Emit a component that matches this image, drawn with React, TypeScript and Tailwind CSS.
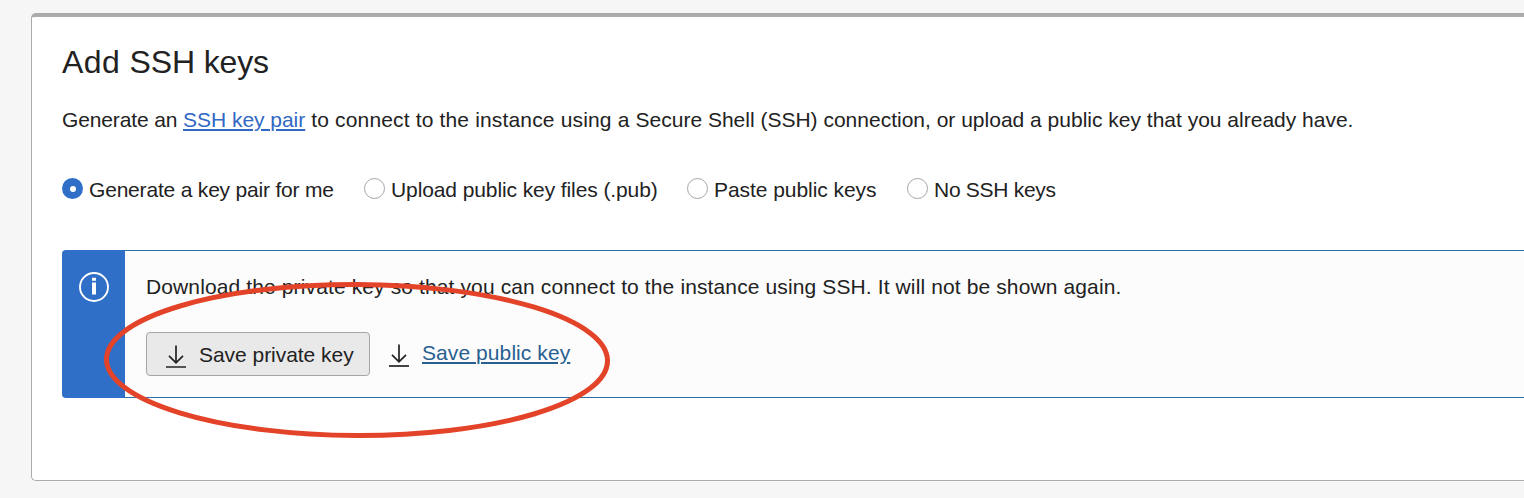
import React from "react";

function DownloadIcon({ className }: { className: string }) {
  return (
    <svg className={className} width="20" height="24" viewBox="0 0 20 24" fill="none" stroke="#222" strokeWidth="1.7">
      <path d="M10 0.5V17.5M3 10.8L10 17.8L17 10.8" />
      <path d="M0 22H20" />
    </svg>
  );
}

type OptionProps = { label: string; checked?: boolean; className: string; labelClass: string };

function RadioOption({ label, checked, className, labelClass }: OptionProps) {
  return (
    <label className={`flex shrink-0 items-start ${className}`}>
      {checked ? (
        <span className="flex size-[21px] shrink-0 items-center justify-center rounded-full bg-[#2f6fc8]">
          <span className="size-1.5 rounded-full bg-white" />
        </span>
      ) : (
        <span className="size-[21px] shrink-0 rounded-full border border-[#a6a6a6] bg-white" />
      )}
      <span className={`ml-1.5 ${labelClass}`}>{label}</span>
    </label>
  );
}

export default function App() {
  return (
    <div className="relative h-[498px] overflow-hidden bg-[#f6f6f6] pt-[13px] pl-[31px] font-['Liberation_Sans',Arial,sans-serif] text-[21px] leading-6 whitespace-nowrap text-[#222]">
      <section className="h-[468px] rounded-l-[5px] border-t-4 border-b border-l border-t-[#ababab] border-b-[#ababab] border-l-[#ababab] bg-white pt-[27px] pl-[30px]">
        <h1 className="text-[32px] leading-9">
          <span className="tracking-[0.4px]">Add </span>
          <span className="tracking-[-0.12px]">SSH keys</span>
        </h1>
        <p className="mt-7">
          <span className="tracking-[-0.13px]">Generate an </span>
          <a className="tracking-[-0.03px] text-[#3068c4] underline decoration-2 underline-offset-2">SSH key pair</a>
          <span className="tracking-[0.16px]"> to connect to the instance using a </span>
          <span>Secure Shell (SSH) connection, or upload a public key that you already have.</span>
        </p>
        <div className="mt-[46px] flex h-6">
          <RadioOption checked label="Generate a key pair for me" className="w-[302px]" labelClass="tracking-[-0.19px]" />
          <RadioOption label="Upload public key files (.pub)" className="w-[323px]" labelClass="tracking-[-0.1px]" />
          <RadioOption label="Paste public keys" className="w-[220px]" labelClass="tracking-[-0.06px]" />
          <RadioOption label="No SSH keys" className="w-[160px]" labelClass="tracking-[-0.28px]" />
        </div>
        <div className="mt-12 flex h-[148px] overflow-hidden rounded-l-[4px] bg-[#fcfcfc]">
          <div className="flex w-[63px] shrink-0 justify-center bg-[#2f6fc8] pt-[22px]">
            <svg width="30" height="30" viewBox="0 0 30 30" fill="none">
              <circle cx="15" cy="15" r="14" stroke="#fff" strokeWidth="1.9" />
              <path d="M13 5.8H17V8.8H13ZM13 10.6H17V22.4H13Z" fill="#fff" />
            </svg>
          </div>
          <div className="grow border-y border-[#2f6ea5] pt-6 pl-[21px]">
            <p className="tracking-[0.12px]">
              Download the private key so that you can connect to the instance using SSH. It will not be shown again.
            </p>
            <div className="mt-[33px] flex items-start">
              <button className="flex h-11 w-56 items-start rounded-[4px] border border-[#a5a5a5] bg-[#e9e9e9] pt-[10px] pl-[19px]">
                <DownloadIcon className="mt-[2px] shrink-0" />
                <span className="ml-[13px] tracking-[-0.04px]">Save private key</span>
              </button>
              <DownloadIcon className="mt-3 ml-[19px] shrink-0" />
              <a className="mt-[9px] ml-[13px] tracking-[0.08px] text-[#286090] underline decoration-2 underline-offset-2">
                Save public key
              </a>
            </div>
          </div>
        </div>
      </section>
      <svg className="pointer-events-none absolute inset-0" width="1524" height="498" fill="none">
        <ellipse cx="357" cy="360" rx="250.5" ry="75.5" stroke="#e34328" strokeWidth="5" transform="rotate(0.2 357 360)" />
      </svg>
    </div>
  );
}
